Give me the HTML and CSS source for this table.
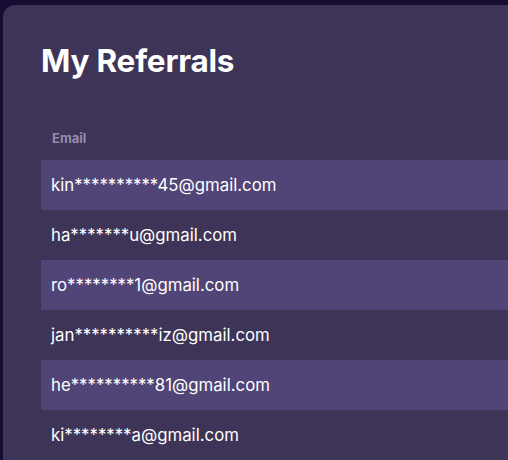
FILE: index.html
```html
<!DOCTYPE html>
<html>
<head>
<meta charset="utf-8">
<link rel="stylesheet" href="styles.css">
</head>
<body>
<div class="page">
  <div class="card">
    <h1 class="title">My Referrals</h1>
    <div class="table">
      <div class="head">Email</div>
      <div class="row alt">kin**********45@gmail.com</div>
      <div class="row">ha*******u@gmail.com</div>
      <div class="row alt">ro********1@gmail.com</div>
      <div class="row">jan**********iz@gmail.com</div>
      <div class="row alt">he**********81@gmail.com</div>
      <div class="row">ki********a@gmail.com</div>
    </div>
  </div>
</div>
</body>
</html>
```

FILE: styles.css
```css
html, body {
  margin: 0;
  padding: 0;
  background: #170d33;
  height: 100%;
  overflow: hidden;
}
.page {
  padding: 5px 0 0 3px;
}
.card {
  box-sizing: border-box;
  background: #3e3457;
  border-radius: 12px 0 0 0;
  padding: 36px 0 0 38px;
  height: 455px;
  font-family: Inter, "Liberation Sans", sans-serif;
  color: #ffffff;
}
.title {
  margin: 0;
  font-size: 31.5px;
  font-weight: 700;
  line-height: 40px;
  letter-spacing: -0.2px;
}
.table {
  margin-top: 44px;
}
.head {
  font-size: 13px;
  font-weight: 700;
  color: #968cad;
  padding: 5px 0 0 11px;
  height: 30px;
  line-height: 16px;
}
.row {
  height: 50px;
  line-height: 50px;
  padding-left: 10px;
  font-size: 16.8px;
}
.alt {
  background: #514477;
}
```
